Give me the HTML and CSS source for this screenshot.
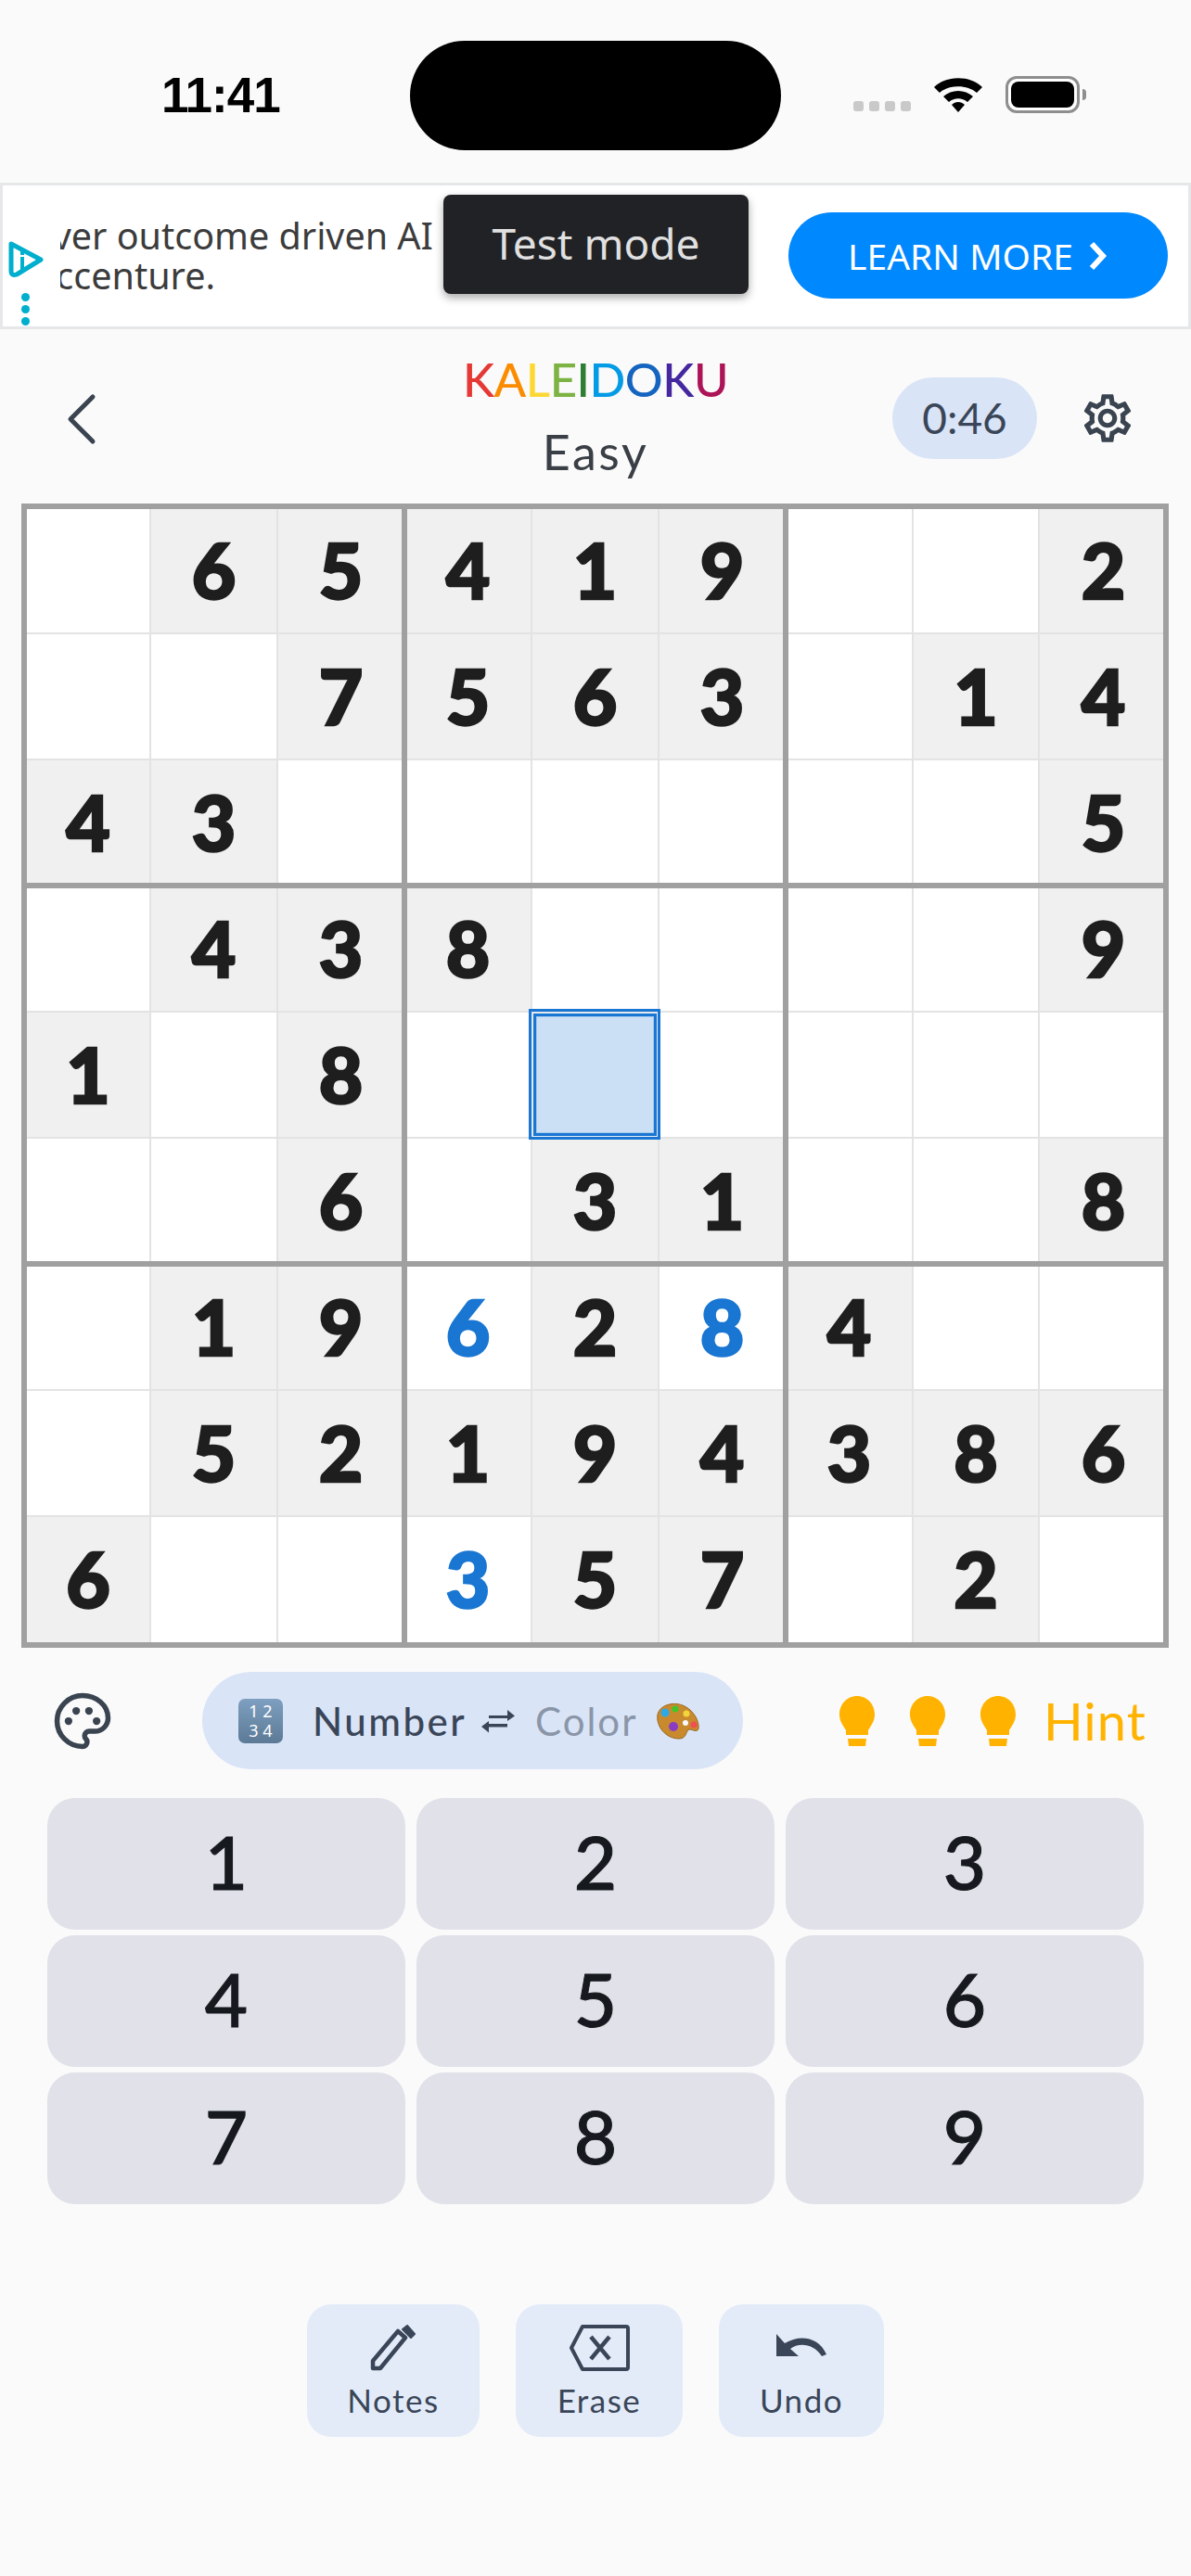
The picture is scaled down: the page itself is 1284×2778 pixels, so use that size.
FILE: index.html
```html
<!DOCTYPE html>
<html lang="en">
  <head>
    <meta charset="UTF-8">
    <meta name="viewport" content="width=device-width, initial-scale=1.0">
    <link rel="stylesheet" href="styles.css">
    <title>Kaleidoku</title>
  </head>
  <body>
    <div class="status-bar">
      <span class="clock">11:41</span>
      <div class="island"></div>
      <div class="status-icons">
        <div class="signal"><i></i><i></i><i></i><i></i></div>
        <svg class="wifi" width="54" height="40" viewBox="0 0 54 40">
          <path d="M1 12 C14 -1 40 -1 53 12 L47 18 C37 9 17 9 7 18 Z" fill="#000"/>
          <path d="M11 22 C20 14 34 14 43 22 L37 28 C31 23 23 23 17 28 Z" fill="#000"/>
          <path d="M20 31 C24 27 30 27 34 31 L27 39 Z" fill="#000"/>
        </svg>
        <div class="battery"><div class="battery-fill"></div></div>
        <div class="battery-cap"></div>
      </div>
    </div>

    <div class="ad">
      <div class="ad-text">
        <span>Deliver outcome driven AI</span>
        <span class="ad-line2">with Accenture.</span>
      </div>
      <div class="ad-badge">
        <svg width="38" height="40" viewBox="0 0 38 40">
          <path d="M3 3 L35 20 L9 36 Q3 38 3 32 Z" fill="none" stroke="#00aecd" stroke-width="5" stroke-linejoin="round"/>
          <rect x="13" y="17" width="4" height="15" fill="#00aecd"/>
          <rect x="13" y="11" width="4" height="4" fill="#00aecd"/>
        </svg>
        <div class="ad-dots"><i></i><i></i><i></i></div>
      </div>
      <div class="test-mode">Test mode</div>
      <div class="learn-more">LEARN MORE
        <svg width="22" height="32" viewBox="0 0 22 32"><path d="M4 3 L16 16 L4 29" fill="none" stroke="#fff" stroke-width="6"/></svg>
      </div>
    </div>

    <div class="top-bar">
      <svg class="back" width="36" height="56" viewBox="0 0 36 56"><path d="M30 4 L6 28 L30 52" fill="none" stroke="#3a4350" stroke-width="5" stroke-linecap="round" stroke-linejoin="round"/></svg>
      <div class="title">
        <div class="logo"><span class="c1">K</span><span class="c2">A</span><span class="c3">L</span><span class="c4">E</span><span class="c5">I</span><span class="c6">D</span><span class="c7">O</span><span class="c8">K</span><span class="c9">U</span></div>
        <div class="level">Easy</div>
      </div>
      <div class="timer">0:46</div>
      <svg class="gear" width="62" height="62" viewBox="0 0 24 24"><path fill="#3a4350" d="M19.430 12.980c.04-.32.07-.64.07-.98 0-.34-.03-.66-.07-.98l2.110-1.650c.19-.15.24-.42.12-.64l-2-3.460c-.09-.16-.26-.25-.44-.25-.06 0-.12.01-.17.03l-2.490 1c-.52-.4-1.080-.73-1.690-.98l-.38-2.650C14.460 2.180 14.250 2 14 2h-4c-.25 0-.46.18-.49.42l-.38 2.650c-.61.25-1.170.59-1.690.98l-2.490-1c-.06-.02-.12-.03-.18-.03-.17 0-.34.09-.43.25l-2 3.460c-.13.22-.07.49.12.64l2.110 1.650c-.04.32-.07.65-.07.98 0 .33.03.66.07.98l-2.110 1.650c-.19.15-.24.42-.12.64l2 3.460c.09.16.26.25.44.25.06 0 .12-.01.17-.03l2.490-1c.52.4 1.080.73 1.690.98l.38 2.650c.03.24.24.42.49.42h4c.25 0 .46-.18.49-.42l.38-2.650c.61-.25 1.170-.59 1.690-.98l2.490 1c.06.02.12.03.18.03.17 0 .34-.09.43-.25l2-3.460c.12-.22.07-.49-.12-.64l-2.110-1.650zm-1.980-1.710c.04.31.05.52.05.73 0 .21-.02.43-.05.73l-.14 1.130.89.7 1.080.84-.7 1.210-1.270-.51-1.040-.42-.9.68c-.43.32-.84.56-1.250.73l-1.060.43-.16 1.130-.2 1.350h-1.400l-.19-1.350-.16-1.130-1.060-.43c-.43-.18-.83-.41-1.230-.71l-.91-.7-1.060.43-1.270.51-.7-1.210 1.080-.84.89-.7-.14-1.130c-.03-.31-.05-.54-.05-.74s.02-.43.05-.73l.14-1.130-.89-.7-1.080-.84.7-1.210 1.270.51 1.040.42.9-.68c.43-.32.84-.56 1.250-.73l1.060-.43.16-1.130.2-1.350h1.390l.19 1.350.16 1.130 1.060.43c.43.18.83.41 1.230.71l.91.7 1.060-.43 1.270-.51.7 1.210-1.070.85-.89.7.14 1.130zM12 8c-2.210 0-4 1.790-4 4s1.790 4 4 4 4-1.790 4-4-1.790-4-4-4zm0 6c-1.100 0-2-.9-2-2s.9-2 2-2 2 .9 2 2-.9 2-2 2z"/></svg>
    </div>

    <div class="board" id="board"></div>

    <div class="mode-row">
      <svg class="palette" width="66" height="66" viewBox="0 0 24 24"><path d="M12 2C6.500 2 2 6.500 2 12s4.500 10 10 10c1 0 1.800-.8 1.800-1.800 0-.5-.2-.9-.5-1.200-.3-.3-.5-.8-.5-1.200 0-1 .8-1.800 1.800-1.800H16.800c2.900 0 5.200-2.300 5.200-5.200C22 5.900 17.500 2 12 2z" fill="none" stroke="#3a4350" stroke-width="2"/><circle cx="6.500" cy="12" r="1.500" fill="#3a4350"/><circle cx="9.500" cy="8" r="1.500" fill="#3a4350"/><circle cx="14.500" cy="8" r="1.500" fill="#3a4350"/><circle cx="17.500" cy="12" r="1.500" fill="#3a4350"/></svg>
      <div class="mode-switch">
        <span class="keycap"><span>1 2</span><span>3 4</span></span>
        <span class="mode-number">Number</span>
        <svg class="swap" width="36" height="26" viewBox="0 0 36 26"><path d="M8 7H28V1L36 7.500 28 13V10H8Z" fill="#3a4658"/><path d="M28 16H8V13L0 19 8 25.500V19.500H28Z" fill="#3a4658"/></svg>
        <span class="mode-color">Color</span>
        <svg class="paint" width="46" height="40" viewBox="0 0 46 40">
          <path d="M1 13C3 3 18 -2 30 4 40 9 46 20 45 28 44 33 39 29 35 29 31 30 33 39 24 39 10 39 -1 26 1 13Z" fill="#c98a2e" stroke="#9a6518"/>
          <circle cx="9" cy="11" r="4.500" fill="#2ea8e6"/>
          <circle cx="20" cy="7" r="3.500" fill="#3fc62a"/>
          <circle cx="32" cy="12" r="3.500" fill="#f2d53c"/>
          <circle cx="31" cy="22" r="3" fill="#fafafa"/>
          <circle cx="40" cy="24" r="3.500" fill="#ef5050"/>
          <circle cx="18" cy="26" r="5" fill="#8a3bc4"/>
        </svg>
      </div>
      <div class="hints">
        <svg class="bulb" width="38" height="54" viewBox="0 0 38 54"><path d="M19 0C8 0 0 9 0 20c0 7 4 12 7 17v5h24v-5c3-5 7-10 7-17C38 9 30 0 19 0zM9 46h20l-1 8H10z" fill="#ffb300"/></svg>
        <svg class="bulb" width="38" height="54" viewBox="0 0 38 54"><path d="M19 0C8 0 0 9 0 20c0 7 4 12 7 17v5h24v-5c3-5 7-10 7-17C38 9 30 0 19 0zM9 46h20l-1 8H10z" fill="#ffb300"/></svg>
        <svg class="bulb" width="38" height="54" viewBox="0 0 38 54"><path d="M19 0C8 0 0 9 0 20c0 7 4 12 7 17v5h24v-5c3-5 7-10 7-17C38 9 30 0 19 0zM9 46h20l-1 8H10z" fill="#ffb300"/></svg>
        <span class="hint-label">Hint</span>
      </div>
    </div>

    <div class="numpad">
      <div class="key">1</div><div class="key">2</div><div class="key">3</div>
      <div class="key">4</div><div class="key">5</div><div class="key">6</div>
      <div class="key">7</div><div class="key">8</div><div class="key">9</div>
    </div>

    <div class="tools">
      <div class="tool tool-notes">
        <svg width="50" height="50" viewBox="0 0 50 50"><path d="M3 47V39L30 7 38 14 11 47Z" fill="none" stroke="#3a4658" stroke-width="4.500" stroke-linejoin="round"/><path d="M35 5 40 1 48 10 44 14Z" fill="#3a4658" stroke="#3a4658" stroke-width="2" stroke-linejoin="round"/></svg>
        <span>Notes</span>
      </div>
      <div class="tool tool-erase">
        <svg width="66" height="50" viewBox="0 0 66 50"><path d="M15 2H62Q64 2 64 4V46Q64 48 62 48H15L3 25Z" fill="none" stroke="#3a4658" stroke-width="4" stroke-linejoin="round"/><path d="M24 13 44 37M44 13 24 37" stroke="#3a4658" stroke-width="4.500"/></svg>
        <span>Erase</span>
      </div>
      <div class="tool tool-undo">
        <svg width="54" height="50" viewBox="0 0 54 50"><path d="M0 10V34H24L15 26C24 19 40 20 49 34L54 32C46 13 25 10 9 20Z" fill="#3a4658"/></svg>
        <span>Undo</span>
      </div>
    </div>

    <script>
      // 0 = empty, a leading "u" marks digits the player filled in
      const puzzle = [
        "065419002",
        "007563014",
        "430000005",
        "043800009",
        "108000000",
        "006031008",
        "019u62u8400",
        "052194386",
        "600u357020"
      ];
      const board = document.getElementById("board");
      puzzle.forEach((row, r) => {
        row.match(/u?\d/g).forEach((d, c) => {
          const cell = document.createElement("div");
          cell.className = "cell";
          if (c % 3 === 2 && c < 8) cell.classList.add("box-right");
          if (r % 3 === 2 && r < 8) cell.classList.add("box-bottom");
          const value = d.replace("u", "");
          if (r === 4 && c === 4) cell.classList.add("selected");
          if (value !== "0") {
            cell.textContent = value;
            cell.classList.add(d[0] === "u" ? "entered" : "given");
          }
          board.appendChild(cell);
        });
      });
    </script>
  </body>
</html>
```

FILE: styles.css
```css
body {
  margin: 0;
  width: 1284px;
  height: 2778px;
  overflow: hidden;
  background-color: #fafafa;
  font-family: Lato, sans-serif;
  color: #1e1e1e;
}

.status-bar {
  height: 197px;
  display: flex;
  align-items: flex-start;
}

.clock {
  margin: 73px 0 0 174px;
  width: 130px;
  font-family: "Liberation Sans", sans-serif;
  font-size: 53px;
  font-weight: bold;
  line-height: 60px;
  letter-spacing: -1px;
  color: #000;
}

.island {
  margin: 44px 0 0 138px;
  width: 400px;
  height: 118px;
  border-radius: 59px;
  background-color: #000;
}

.status-icons {
  margin: 82px 0 0 78px;
  display: flex;
  align-items: center;
}

.signal {
  display: flex;
  gap: 6px;
  margin-top: 24px;
}

.signal i {
  width: 11px;
  height: 11px;
  border-radius: 3px;
  background-color: #c9c9c9;
}

.wifi {
  margin-left: 24px;
}

.battery {
  margin-left: 24px;
  width: 80px;
  height: 40px;
  box-sizing: border-box;
  border: 3px solid #8e8e8e;
  border-radius: 12px;
  padding: 3px;
  background-color: #fff;
}

.battery-fill {
  height: 100%;
  border-radius: 8px;
  background-color: #000;
}

.battery-cap {
  width: 4px;
  height: 12px;
  margin-left: 3px;
  border-radius: 0 6px 6px 0;
  background-color: #8e8e8e;
}

.ad {
  height: 158px;
  box-sizing: border-box;
  border: 3px solid #e6e7e9;
  background-color: #fff;
  position: relative;
  display: flex;
  align-items: center;
  justify-content: flex-end;
  padding-right: 22px;
  overflow: hidden;
  font-family: "Noto Sans", sans-serif;
}

.ad-text {
  position: absolute;
  left: 62px;
  top: 33px;
  width: 402px;
  height: 86px;
  overflow: hidden;
  display: flex;
  flex-direction: column;
  align-items: flex-end;
  font-size: 39.500px;
  line-height: 43px;
  color: #3c3c3c;
  white-space: nowrap;
}

.ad-line2 {
  margin-right: 235px;
}

.ad-badge {
  position: absolute;
  left: 6px;
  top: 60px;
}

.ad-dots {
  display: flex;
  flex-direction: column;
  align-items: center;
  gap: 4px;
  width: 36px;
  margin-top: 11px;
}

.ad-dots i {
  width: 9px;
  height: 9px;
  border-radius: 50%;
  background-color: #00aecd;
}

.test-mode {
  position: absolute;
  left: 475px;
  top: 10px;
  width: 329px;
  height: 107px;
  border-radius: 8px;
  background-color: #212226;
  box-shadow: 0 4px 10px rgba(0, 0, 0, 0.35);
  color: #e0e0e0;
  font-size: 46px;
  line-height: 104px;
  text-align: center;
}

.learn-more {
  width: 409px;
  height: 93px;
  margin-top: -1px;
  border-radius: 47px;
  background-color: #0088ff;
  color: #fff;
  font-size: 39px;
  display: flex;
  align-items: center;
  justify-content: center;
  gap: 16px;
}

.top-bar {
  height: 188px;
  position: relative;
}

.back {
  position: absolute;
  left: 70px;
  top: 69px;
}

.title {
  text-align: center;
  padding-top: 24px;
}

.logo {
  font-size: 51px;
  font-weight: 500;
  line-height: 60px;
  letter-spacing: -0.500px;
}

.c1 { color: #e53935; }
.c2 { color: #fb8c00; }
.c3 { color: #fdd835; }
.c4 { color: #7cb342; }
.c5 { color: #2e7d32; }
.c6 { color: #039be5; }
.c7 { color: #1565c0; }
.c8 { color: #4527a0; }
.c9 { color: #ad1457; }

.level {
  margin-top: 17px;
  font-size: 52px;
  line-height: 62px;
  letter-spacing: 2.500px;
  color: #3a3f46;
}

.timer {
  position: absolute;
  left: 962px;
  top: 52px;
  width: 156px;
  height: 88px;
  border-radius: 44px;
  background-color: #d9e4f7;
  color: #3a4658;
  font-size: 46px;
  line-height: 88px;
  text-align: center;
}

.gear {
  position: absolute;
  left: 1163px;
  top: 65px;
}

.board {
  margin-left: 23px;
  width: 1237px;
  height: 1234px;
  box-sizing: border-box;
  border: 6px solid #a0a0a0;
  display: grid;
  grid-template-columns: 134px repeat(6, 137px) 136px 133px;
  grid-template-rows: 135px repeat(7, 136px) 135px;
  background-color: #fff;
}

.cell {
  position: relative;
  box-sizing: border-box;
  padding-bottom: 3px;
  border-right: 2px solid #e3e3e3;
  border-bottom: 2px solid #e3e3e3;
  background-color: #fff;
  display: flex;
  align-items: center;
  justify-content: center;
  font-size: 82px;
  font-weight: 900;
  line-height: 1;
  -webkit-text-stroke: 2.500px currentColor;
}

.cell:nth-child(9n) {
  border-right: none;
  padding-left: 4px;
}

.cell:nth-last-child(-n+9) {
  border-bottom: none;
}

/* thick box lines sit on top of the cell edges, centred on them */
.cell.box-right::after,
.cell.box-bottom::before {
  content: "";
  position: absolute;
  background-color: #a0a0a0;
  z-index: 1;
}

.cell.box-right::after {
  top: 0;
  bottom: -2px;
  right: -4px;
  width: 6px;
}

.cell.box-bottom::before {
  left: 0;
  right: -2px;
  bottom: -4px;
  height: 6px;
}

.given {
  background-color: #f0f0f0;
}

.entered {
  color: #1976d2;
}

.selected {
  z-index: 2;
  background-color: #cce0f5;
  box-shadow: inset 0 0 0 1px #e8eef6, inset 0 0 0 4px #1976d2, inset 0 0 0 5px #a6c8ec;
}

.selected::before {
  content: "";
  position: absolute;
  inset: -4px -3px -3px -4px;
  border: 3px solid #1976d2;
}

.mode-row {
  height: 105px;
  margin-top: 26px;
  display: flex;
  align-items: center;
}

.palette {
  margin-left: 56px;
}

.mode-switch {
  margin-left: 96px;
  width: 583px;
  height: 105px;
  box-sizing: border-box;
  padding-left: 39px;
  border-radius: 53px;
  background-color: #d9e4f7;
  display: flex;
  align-items: center;
}

.keycap {
  width: 48px;
  height: 48px;
  border-radius: 7px;
  background: linear-gradient(#7e9fc0, #5c7a96);
  color: #fff;
  font-family: "Noto Sans", sans-serif;
  font-size: 18px;
  line-height: 21px;
  display: flex;
  flex-direction: column;
  align-items: center;
  justify-content: center;
}

.mode-number {
  margin-left: 32px;
  width: 161px;
  font-size: 42px;
  font-weight: 500;
  letter-spacing: 2.500px;
  color: #3a4658;
  white-space: nowrap;
}

.swap {
  margin-left: 21px;
}

.mode-color {
  margin-left: 22px;
  width: 107px;
  font-size: 42px;
  letter-spacing: 2px;
  color: #8a96a8;
}

.paint {
  margin-left: 24px;
}

.hints {
  margin-left: 104px;
  display: flex;
  align-items: center;
  gap: 38px;
}

.hint-label {
  margin-left: -8px;
  font-size: 56px;
  letter-spacing: 1px;
  color: #ffb300;
}

.numpad {
  margin: 31px 0 0 51px;
  display: grid;
  grid-template-columns: repeat(3, 386px);
  grid-auto-rows: 142px;
  gap: 6px 12px;
}

.key {
  border-radius: 30px;
  background-color: #e0e1e9;
  font-size: 80px;
  font-weight: 500;
  line-height: 136px;
  text-align: center;
  color: #16191d;
  -webkit-text-stroke: 1px currentColor;
}

.tools {
  margin: 108px 0 0 331px;
  display: flex;
  gap: 39px;
}

.tool {
  height: 143px;
  box-sizing: border-box;
  padding-top: 22px;
  border-radius: 26px;
  background-color: #e3ebf9;
  display: flex;
  flex-direction: column;
  align-items: center;
  color: #3a4658;
  font-size: 35px;
  line-height: 46px;
  letter-spacing: 1.500px;
}

.tool span {
  margin-top: 8px;
}

.tool-notes {
  width: 186px;
}

.tool-erase {
  width: 180px;
}

.tool-undo {
  width: 178px;
}
```
